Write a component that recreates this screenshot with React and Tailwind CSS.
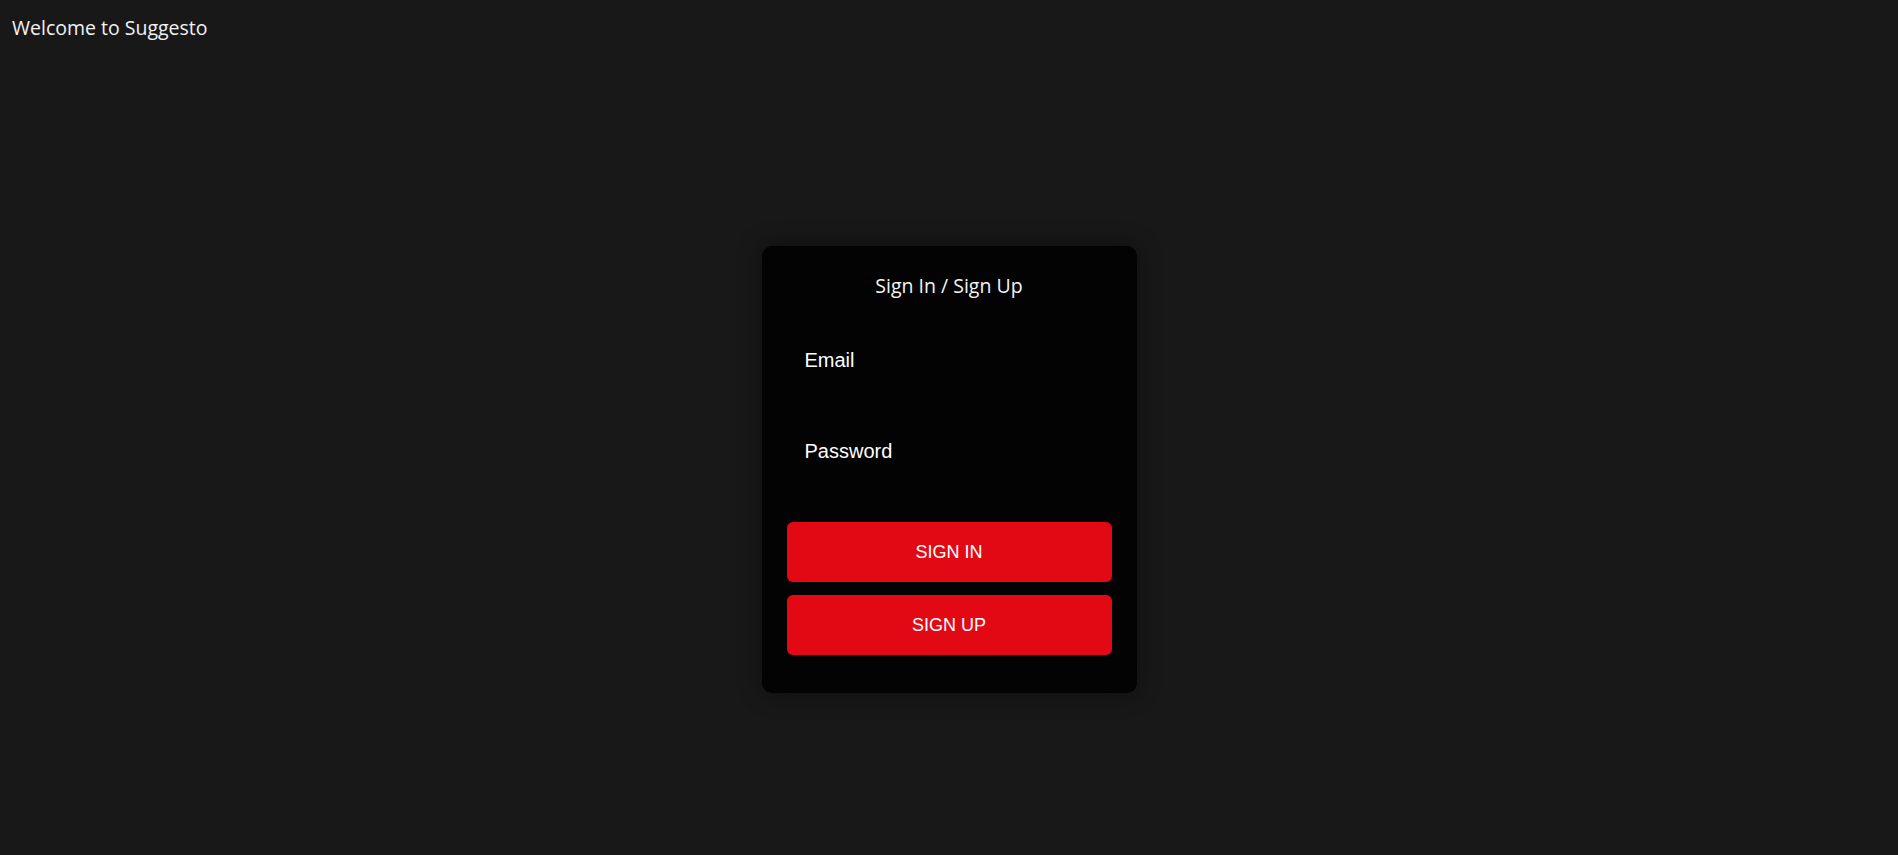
import React from 'react';

const App = () => {
    return (
        <div className="min-h-screen bg-[#181818] text-white" style={{ fontFamily: '"Open Sans", sans-serif' }}>
            {/* Header */}
            <div className="px-[12px] pt-[15px] text-[19.5px] leading-[25px] text-[#f2f2f2]">Welcome to Suggesto</div>

            {/* Auth card */}
            <div className="flex justify-center mt-[206px]">
                <div className="w-[375px] rounded-[10px] bg-[#030303] px-[25px] pt-[27px] pb-[38px] shadow-[0_0_24px_rgba(0,0,0,0.4)]">
                    <h2 className="text-center text-[19.5px] leading-[26px] font-normal text-[#f5f5f5]">Sign In / Sign Up</h2>

                    <div className="mt-[50px] px-[18px] font-['Liberation_Sans',Arial,sans-serif] text-[20px] leading-[23px]">
                        <label className="block">Email</label>
                        <label className="block mt-[68px]">Password</label>
                    </div>

                    <div className="mt-[59px] flex flex-col gap-[13px] font-['Liberation_Sans',Arial,sans-serif]">
                        <button className="h-[60px] w-full rounded-[6px] bg-[#e30914] text-[18px] text-white">SIGN IN</button>
                        <button className="h-[60px] w-full rounded-[6px] bg-[#e30914] text-[18px] text-white">SIGN UP</button>
                    </div>
                </div>
            </div>
        </div>
    );
};

export default App;
